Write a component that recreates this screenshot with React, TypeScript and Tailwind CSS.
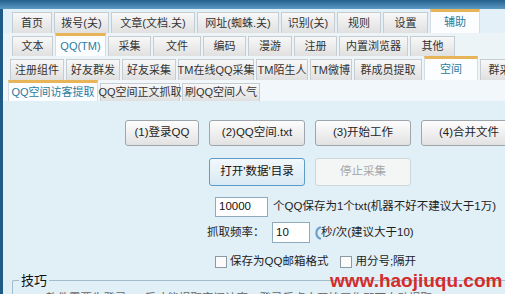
// Tab row data: label + pixel width of each tab, selected index per row
interface TabItem {
  label: string;
  width: number;
}

interface TabRowProps {
  tabs: TabItem[];
  active: number;
  height: number;
  className?: string;
}

const row1: TabItem[] = [
  { label: '首页', width: 40 },
  { label: '拨号(关)', width: 55 },
  { label: '文章(文档.关)', width: 84 },
  { label: '网址(蜘蛛.关)', width: 82 },
  { label: '识别(关)', width: 54 },
  { label: '规则', width: 44 },
  { label: '设置', width: 45 },
  { label: '辅助', width: 50 },
];

const row2: TabItem[] = [
  { label: '文本', width: 41 },
  { label: 'QQ(TM)', width: 51 },
  { label: '采集', width: 43 },
  { label: '文件', width: 48 },
  { label: '编码', width: 43 },
  { label: '漫游', width: 44 },
  { label: '注册', width: 43 },
  { label: '内置浏览器', width: 69 },
  { label: '其他', width: 45 },
];

const row3: TabItem[] = [
  { label: '注册组件', width: 54 },
  { label: '好友群发', width: 54 },
  { label: '好友采集', width: 54 },
  { label: 'TM在线QQ采集', width: 76 },
  { label: 'TM陌生人', width: 52 },
  { label: 'TM微博', width: 42 },
  { label: '群成员提取', width: 68 },
  { label: '空间', width: 54 },
  { label: '群采集', width: 50 },
];

const row4: TabItem[] = [
  { label: 'QQ空间访客提取', width: 90 },
  { label: 'QQ空间正文抓取', width: 80 },
  { label: '刷QQ空间人气', width: 78 },
];

const TabRow = ({ tabs, active, height, className = '' }: TabRowProps) => (
  <div
    className={`flex items-end gap-[2px] shrink-0 whitespace-nowrap text-[11px] ${className}`}
    style={{ height }}
  >
    {tabs.map((tab, i) =>
      i === active ? (
        <div
          key={tab.label}
          className="shrink-0 h-full flex items-center justify-center border-t-[3px] border-t-[#e8b458] border-x border-x-[#d3dde3] bg-[#fbfdfe] text-[#2b7c9e]"
          style={{ width: tab.width }}
        >
          {tab.label}
        </div>
      ) : (
        <div
          key={tab.label}
          className="shrink-0 h-[calc(100%-3px)] flex items-center justify-center border border-b-0 border-[#c6cdd2] bg-linear-to-b from-[#f8f8f8] to-[#e0e0e0] text-[#333]"
          style={{ width: tab.width }}
        >
          {tab.label}
        </div>
      ),
    )}
  </div>
);

const Btn = ({
  label,
  w,
  h = 'h-[26px]',
  variant = 'normal',
}: {
  label: string;
  w: string;
  h?: string;
  variant?: 'normal' | 'focus' | 'disabled';
}) => {
  const look =
    variant === 'focus'
      ? 'border-[#5b9cc9] bg-linear-to-b from-[#f2f8fc] to-[#d9e9f4] text-[#111]'
      : variant === 'disabled'
        ? 'border-[#cfd6da] bg-[#f4f5f5] text-[#a3a7aa]'
        : 'border-[#9ea6ab] bg-linear-to-b from-[#fdfdfd] to-[#e2e2e2] text-[#1e1e1e]';
  return (
    <button
      className={`shrink-0 ${w} ${h} border rounded-[3px] flex items-center justify-center whitespace-nowrap ${look}`}
    >
      {label}
    </button>
  );
};

export default function App() {
  return (
    <div className="relative w-[505px] h-[294px] overflow-hidden bg-[#e4f0f7] flex flex-col font-['Liberation_Sans','Noto_Sans_CJK_SC',sans-serif] text-[11.5px] leading-none">
      {/* window title strip */}
      <div className="h-[9px] shrink-0 bg-linear-to-b from-[#24608c] to-[#5b9bc4]" />

      <div className="flex flex-1 min-h-0">
        <div className="w-[3px] shrink-0 bg-[#1f5b86]" />

        <div className="flex-1 min-w-0 flex flex-col">
          <TabRow tabs={row1} active={7} height={24} className="pl-[9px]" />
          <TabRow tabs={row2} active={1} height={23} className="pl-[9px] bg-[#edf4f8]" />
          <TabRow tabs={row3} active={7} height={24} className="pl-[7px] bg-[#eef5f9]" />
          <TabRow tabs={row4} active={0} height={21} className="pl-[5px] bg-[#f1f7fa]" />

          <div className="flex-1 flex flex-col bg-[#e1eff7]">
            {/* step buttons */}
            <div className="flex gap-[10px] pl-[122px] mt-[19px]">
              <Btn label="(1)登录QQ" w="w-[74px]" />
              <Btn label="(2)QQ空间.txt" w="w-[96px]" />
              <Btn label="(3)开始工作" w="w-[96px]" />
              <Btn label="(4)合并文件" w="w-[96px]" />
            </div>
            <div className="flex gap-[10px] pl-[206px] mt-[12px]">
              <Btn label="打开'数据'目录" w="w-[96px]" h="h-[28px]" variant="focus" />
              <Btn label="停止采集" w="w-[96px]" h="h-[28px]" variant="disabled" />
            </div>

            {/* settings */}
            <div className="flex items-center pl-[212px] mt-[11px] whitespace-nowrap">
              <div className="w-[53px] h-[20px] border border-[#8fa9bd] bg-white flex items-center pl-[3px] text-[#111]">
                10000
              </div>
              <span className="ml-[5px] text-[#1e1e1e]">个QQ保存为1个txt(机器不好不建议大于1万)</span>
            </div>
            <div className="flex items-center pl-[204px] mt-[5px] whitespace-nowrap">
              <span className="w-[58px] text-[#1e1e1e]">抓取频率：</span>
              <div className="ml-[7px] w-[38px] h-[21px] border border-[#8fa9bd] bg-white flex items-center pl-[3px] text-[#111]">
                10
              </div>
              <svg className="ml-[2px] shrink-0" width="9" height="16" viewBox="0 0 9 16">
                <path
                  d="M8 2.5 A6 6 0 0 0 8 13.5"
                  fill="none"
                  stroke="#6e9fcf"
                  strokeWidth="2.2"
                  strokeLinecap="round"
                />
              </svg>
              <span className="text-[#1e1e1e]">秒/次(建议大于10)</span>
            </div>
            <div className="flex items-center pl-[212px] mt-[13px] whitespace-nowrap text-[#1e1e1e]">
              <span className="w-[12px] h-[12px] border border-[#8e9aa3] bg-[#fbfbfb]" />
              <span className="ml-[3px]">保存为QQ邮箱格式</span>
              <span className="ml-[12px] w-[12px] h-[12px] border border-[#8e9aa3] bg-[#fbfbfb]" />
              <span className="ml-[3px]">用分号;隔开</span>
            </div>

            {/* tips group */}
            <fieldset className="ml-[9px] mt-[6px] h-[40px] border border-r-0 border-[#a3bccb] rounded-tl-[2px]">
              <legend className="ml-[6px] px-[2px] text-[13px] text-[#111]">技巧</legend>
              <p className="mt-[6px] pl-[33px] text-[#666] whitespace-nowrap">
                软件需要先登录QQ后才能提取空间访客，登录后点击开始工作即可自动提取
              </p>
            </fieldset>
          </div>
        </div>
      </div>

      {/* watermark */}
      <div className="absolute left-[330px] top-[271px] font-['Liberation_Sans',sans-serif] font-bold text-[19px] leading-none text-[#d42b2b]">
        www.haojiuqu.com
      </div>
    </div>
  );
}
